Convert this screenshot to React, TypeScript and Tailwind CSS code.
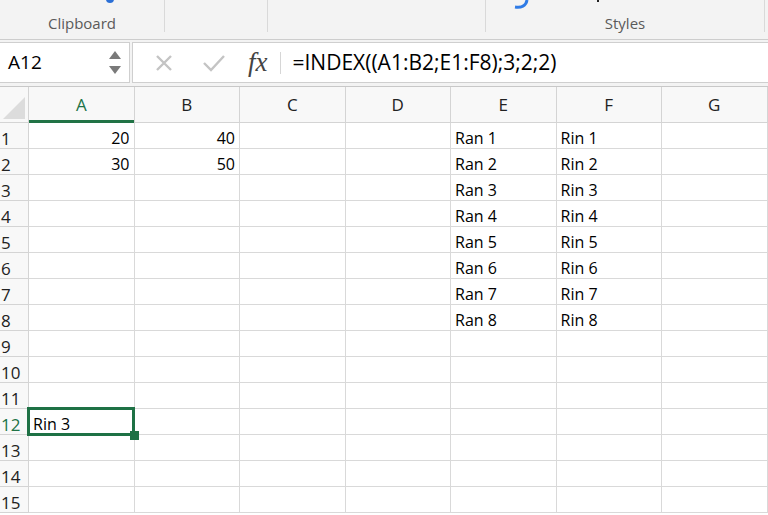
import React from "react";

const COLS = ["A", "B", "C", "D", "E", "F", "G"];

type Cell = { v: string; align?: "left" | "right" };

const data: Record<string, Cell> = {
  A1: { v: "20", align: "right" },
  B1: { v: "40", align: "right" },
  A2: { v: "30", align: "right" },
  B2: { v: "50", align: "right" },
  A12: { v: "Rin 3" },
};
for (let i = 1; i <= 8; i++) {
  data[`E${i}`] = { v: `Ran ${i}` };
  data[`F${i}`] = { v: `Rin ${i}` };
}

const font = { fontFamily: '"Open Sans", "Liberation Sans", sans-serif' };

const Ribbon = () => (
  <div className="flex h-[40px] bg-[#f3f3f3] border-b border-[#cdcdcd] relative overflow-hidden">
    <div className="w-[165px] border-r border-[#d9d9d9] mb-[7px] flex items-end justify-center pb-[1px]">
      <span className="text-[15px] text-[#5a5a5a] leading-none">Clipboard</span>
    </div>
    <div className="w-[103px] border-r border-[#d9d9d9] mb-[7px]" />
    <div className="w-[218px] border-r border-[#d9d9d9] mb-[7px]" />
    <div className="w-[279px] border-r border-[#d9d9d9] mb-[7px] flex items-end justify-center pb-[1px]">
      <span className="text-[15px] text-[#5a5a5a] leading-none">Styles</span>
    </div>
    {/* partial icons cut off at the top */}
    <span className="absolute left-[106px] top-[-5px] w-[8px] h-[8px] rounded-full bg-[#2b6fd6]" />
    <svg className="absolute left-[513px] top-0" width="16" height="10" viewBox="0 0 16 10">
      <path d="M14 0 C13 6 8 8 2 7" stroke="#2f7be6" strokeWidth="3" fill="none" />
    </svg>
    <span className="absolute left-[597px] top-0 w-[2px] h-[2px] bg-[#222]" />
  </div>
);

const FormulaBar = () => (
  <div className="flex h-[46px] bg-[#f3f3f3] pt-[2px] pb-[3px] gap-[2px]">
    <div className="w-[130px] bg-white border border-l-0 border-[#cfcfcf] flex items-center pl-[8px] pr-[8px]">
      <span className="text-[19px] text-black flex-1">A12</span>
      <div className="flex flex-col gap-[7px] items-center">
        <svg width="12" height="8" viewBox="0 0 12 8"><path d="M6 0 L12 8 L0 8 Z" fill="#7a7a7a" /></svg>
        <svg width="12" height="8" viewBox="0 0 12 8"><path d="M0 0 L12 0 L6 8 Z" fill="#7a7a7a" /></svg>
      </div>
    </div>
    <div className="flex-1 bg-white border border-r-0 border-[#cfcfcf] flex items-center">
      <svg className="ml-[22px]" width="18" height="18" viewBox="0 0 18 18">
        <path d="M2 2 L16 16 M16 2 L2 16" stroke="#c4c4c4" strokeWidth="2.4" />
      </svg>
      <svg className="ml-[30px]" width="22" height="18" viewBox="0 0 22 18">
        <path d="M1 9 L8 16 L21 2" stroke="#c4c4c4" strokeWidth="2.4" fill="none" />
      </svg>
      <span
        className="ml-[23px] text-[27px] italic text-[#444] leading-none"
        style={{ fontFamily: '"Liberation Serif", serif' }}
      >
        fx
      </span>
      <span className="ml-[12px] w-px h-[22px] bg-[#d6d6d6]" />
      <span className="ml-[12px] text-[21px] text-black">=INDEX((A1:B2;E1:F8);3;2;2)</span>
    </div>
  </div>
);

const Grid = () => {
  const rows = Array.from({ length: 15 }, (_, i) => i + 1);
  return (
    <div className="grid grid-cols-[29px_repeat(7,105.5px)] border-t border-[#c8c8c8]">
      <div className="h-[36px] bg-[#f8f8f8] border-r border-b border-[#d4d4d4] relative">
        <svg className="absolute right-[3px] bottom-[3px]" width="22" height="22" viewBox="0 0 22 22">
          <path d="M22 0 L22 22 L0 22 Z" fill="#dcdcdc" />
        </svg>
      </div>
      {COLS.map((c) => (
        <div
          key={c}
          className={`h-[36px] bg-[#f8f8f8] border-r border-b border-[#d4d4d4] flex items-center justify-center text-[17px] relative ${
            c === "A" ? "text-[#217346]" : "text-[#222]"
          }`}
        >
          {c}
          {c === "A" && <span className="absolute left-0 right-0 bottom-[-1px] h-[3px] bg-[#217346]" />}
        </div>
      ))}
      {rows.map((r) => (
        <React.Fragment key={r}>
          <div
            className={`h-[26px] bg-[#f8f8f8] border-r border-b border-[#d4d4d4] flex items-end pb-[1px] pl-[1px] text-[17px] leading-none ${
              r === 12 ? "text-[#217346]" : "text-[#222]"
            }`}
          >
            {r}
          </div>
          {COLS.map((c) => {
            const cell = data[`${c}${r}`];
            const sel = c === "A" && r === 12;
            return (
              <div
                key={c}
                className={`h-[26px] border-r border-b border-[#d9d9d9] flex items-end pb-[2px] text-[16px] leading-none relative px-[4px] ${
                  cell?.align === "right" ? "justify-end" : "justify-start"
                } ${sel ? "z-10" : ""}`}
              >
                {cell?.v}
                {sel && (
                  <>
                    <span className="absolute left-[-2px] top-[-2px] right-[-1px] bottom-[-2px] border-[3px] border-[#1e7145]" />
                    <span className="absolute right-[-5px] bottom-[-6px] w-[9px] h-[9px] bg-[#1e7145]" />
                  </>
                )}
              </div>
            );
          })}
        </React.Fragment>
      ))}
    </div>
  );
};

export default function App() {
  return (
    <div className="w-[768px] h-[515px] overflow-hidden bg-white" style={font}>
      <Ribbon />
      <FormulaBar />
      <Grid />
    </div>
  );
}
